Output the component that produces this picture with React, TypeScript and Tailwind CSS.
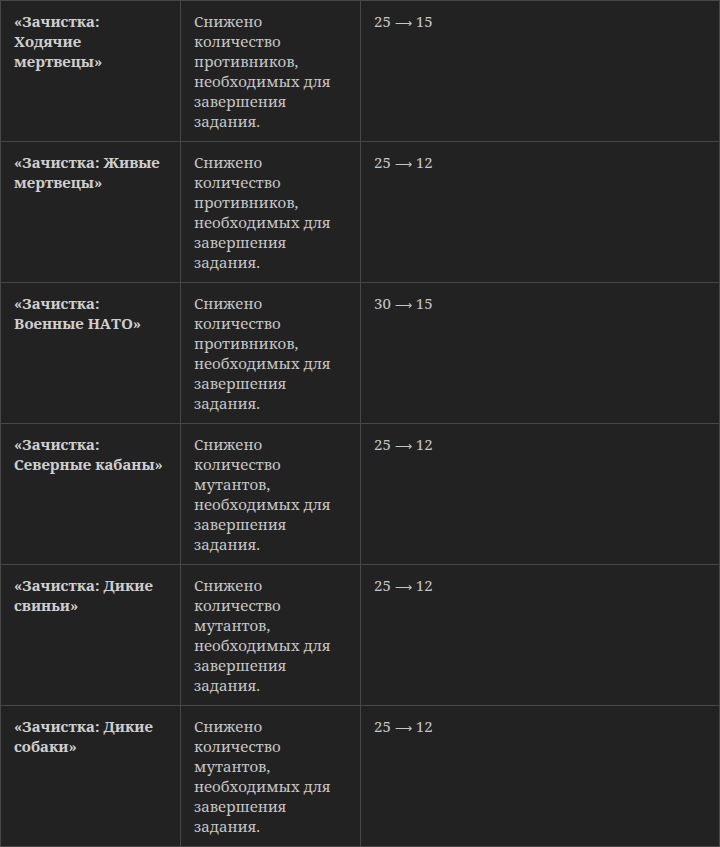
import React from "react";

interface Row {
  name: string;
  change: string;
  from: number;
  to: number;
}

const rows: Row[] = [
  { name: "«Зачистка: Ходячие мертвецы»", change: "Снижено количество противников, необходимых для завершения задания.", from: 25, to: 15 },
  { name: "«Зачистка: Живые мертвецы»", change: "Снижено количество противников, необходимых для завершения задания.", from: 25, to: 12 },
  { name: "«Зачистка: Военные НАТО»", change: "Снижено количество противников, необходимых для завершения задания.", from: 30, to: 15 },
  { name: "«Зачистка: Северные кабаны»", change: "Снижено количество мутантов, необходимых для завершения задания.", from: 25, to: 12 },
  { name: "«Зачистка: Дикие свиньи»", change: "Снижено количество мутантов, необходимых для завершения задания.", from: 25, to: 12 },
  { name: "«Зачистка: Дикие собаки»", change: "Снижено количество мутантов, необходимых для завершения задания.", from: 25, to: 12 },
];

const cell = "border border-[#474747] align-top px-[13px] pt-[10px] pb-[10px] h-[141px]";

const App: React.FC = () => {
  return (
    <div className="min-h-screen bg-[#222222] font-['Noto_Serif','DejaVu_Serif',serif] text-[15px] leading-[20px] text-[#c6c6c6]">
      <table className="w-[720px] table-fixed border-collapse">
        <colgroup>
          <col className="w-[180px]" />
          <col className="w-[180px]" />
          <col />
        </colgroup>
        <tbody>
          {rows.map((row, i) => (
            <tr key={i}>
              <td className={`${cell} font-bold text-[#cfcfcf]`}>{row.name}</td>
              <td className={cell}>{row.change}</td>
              <td className={cell}>
                {row.from} <span className="font-['DejaVu_Sans',sans-serif] text-[12px]">⟶</span> {row.to}
              </td>
            </tr>
          ))}
        </tbody>
      </table>
    </div>
  );
};

export default App;
